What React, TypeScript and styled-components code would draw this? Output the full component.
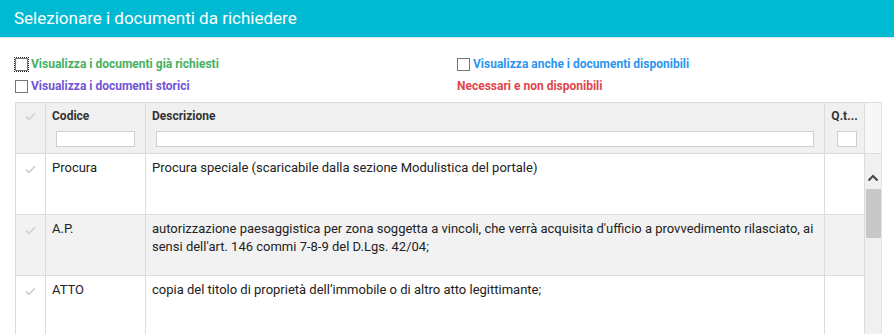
import styled, { createGlobalStyle } from 'styled-components'

const GlobalStyle = createGlobalStyle`
  html, body {
    margin: 0;
    padding: 0;
    background: #fff;
    font-family: Roboto, "Liberation Sans", Arial, sans-serif;
  }
  * { box-sizing: border-box; }
`

interface IDocumento {
  codice: string
  descrizione: string
}

const documenti: IDocumento[] = [
  { codice: 'Procura', descrizione: 'Procura speciale (scaricabile dalla sezione Modulistica del portale)' },
  {
    codice: 'A.P.',
    descrizione:
      "autorizzazione paesaggistica per zona soggetta a vincoli, che verrà acquisita d'ufficio a provvedimento rilasciato, ai sensi dell'art. 146 commi 7-8-9 del D.Lgs. 42/04;",
  },
  { codice: 'ATTO', descrizione: 'copia del titolo di proprietà dell’immobile o di altro atto legittimante;' },
]

const CheckMark = () => (
  <svg width="11" height="9" viewBox="0 0 11 9" style={{ display: 'block' }}>
    <path d="M1 4.6 L4 7.4 L10 1.2" fill="none" stroke="#cfcfcf" strokeWidth="1.6" />
  </svg>
)

const App = () => {
  return <Page>
    <GlobalStyle />
    <TitleBar>Selezionare i documenti da richiedere</TitleBar>
    <Options>
      <div>
        <Option color="#45b062">
          <CheckBox focused />Visualizza i documenti già richiesti
        </Option>
        <Option color="#7153d6">
          <CheckBox />Visualizza i documenti storici
        </Option>
      </div>
      <div>
        <Option color="#2b95ef">
          <CheckBox />Visualizza anche i documenti disponibili
        </Option>
        <Legend>Necessari e non disponibili</Legend>
      </div>
    </Options>
    <Grid>
      <HeadRow>
        <HeadCell><CheckMark /></HeadCell>
        <HeadCell>Codice<FilterInput width={79} /></HeadCell>
        <HeadCell>Descrizione<FilterInput width={658} /></HeadCell>
        <HeadCell center>Q.t...<FilterInput width={20} /></HeadCell>
        <Gutter />
      </HeadRow>
      <Body>
        <Rows>
          {documenti.map(({ codice, descrizione }, i) =>
            <Row key={codice} odd={i % 2 === 1}>
              <Cell><CheckMark /></Cell>
              <Cell>{codice}</Cell>
              <Cell>{descrizione}</Cell>
              <Cell />
            </Row>
          )}
        </Rows>
        <ScrollTrack>
          <svg width="12" height="8" viewBox="0 0 12 8">
            <path d="M1.5 6.5 L6 2 L10.5 6.5" fill="none" stroke="#4a4a4a" strokeWidth="2.2" />
          </svg>
          <Thumb />
        </ScrollTrack>
      </Body>
    </Grid>
  </Page>
}

const Page = styled.div`
  width: 894px;
  height: 334px;
  overflow: hidden;
`

const TitleBar = styled.div`
  height: 38px;
  background: #00bad3;
  border-bottom: 1px solid #d8e6e8;
  color: #fff;
  font-size: 17px;
  line-height: 37px;
  padding-left: 14px;
`

const Options = styled.div`
  display: grid;
  grid-template-columns: 442px 1fr;
  padding: 15px 0 0 15px;
  height: 64px;
`

const Option = styled.div<{ color: string }>`
  display: flex;
  align-items: center;
  height: 22px;
  color: ${({ color }) => color};
  font-size: 12px;
  font-weight: bold;
`

const CheckBox = styled.span<{ focused?: boolean }>`
  width: 13px;
  height: 13px;
  border: 1px solid #777;
  margin-right: 3px;
  background: #fff;
  outline: ${({ focused }) => (focused ? '1px dotted #222' : 'none')};
`

const Legend = styled.div`
  height: 22px;
  line-height: 22px;
  color: #de464c;
  font-size: 12px;
  font-weight: bold;
`

const Grid = styled.div`
  margin-left: 15px;
  width: 867px;
`

const HeadRow = styled.div`
  display: grid;
  grid-template-columns: 30px 100px 679px 40px 18px;
  height: 52px;
  border-top: 1px solid #dcdcdc;
  border-bottom: 1px solid #dcdcdc;
`

const HeadCell = styled.div<{ center?: boolean }>`
  display: flex;
  flex-direction: column;
  align-items: ${({ center }) => (center ? 'center' : 'flex-start')};
  gap: 8px;
  padding: 6px 0 0 ${({ center }) => (center ? '0' : '6px')};
  background: #f0f0f0;
  border-left: 1px solid #dcdcdc;
  color: #333;
  font-size: 12px;
  font-weight: bold;
  line-height: 14px;
  &:first-child {
    padding: 9px 0 0 9px;
  }
`

const Gutter = styled.div`
  background: #f7f7f7;
  border-left: 1px solid #dcdcdc;
  border-right: 1px solid #e4e4e4;
`

const FilterInput = styled.input<{ width: number }>`
  width: ${({ width }) => width}px;
  height: 16px;
  margin-left: 4px;
  border: 1px solid #cfcfcf;
  background: #fff;
  padding: 0;
  align-self: ${({ width }) => (width < 30 ? 'center' : 'auto')};
`

const Body = styled.div`
  display: flex;
`

const Rows = styled.div`
  width: 849px;
`

const Row = styled.div<{ odd: boolean }>`
  display: grid;
  grid-template-columns: 30px 100px 679px 40px;
  min-height: 61px;
  background: ${({ odd }) => (odd ? '#f2f2f2' : '#fff')};
  border-bottom: 1px solid #dcdcdc;
`

const Cell = styled.div`
  border-left: 1px solid #dcdcdc;
  padding: 5px 10px 6px 6px;
  color: #222;
  font-size: 13px;
  line-height: 18px;
  &:first-child {
    padding: 11px 0 0 9px;
  }
`

const ScrollTrack = styled.div`
  display: flex;
  flex-direction: column;
  align-items: center;
  width: 18px;
  padding-top: 20px;
  background: #f0f0f0;
  border-left: 1px solid #dcdcdc;
  border-right: 1px solid #e4e4e4;
`

const Thumb = styled.div`
  width: 15px;
  height: 49px;
  margin-top: 7px;
  background: #c8c8c8;
`

export default App
